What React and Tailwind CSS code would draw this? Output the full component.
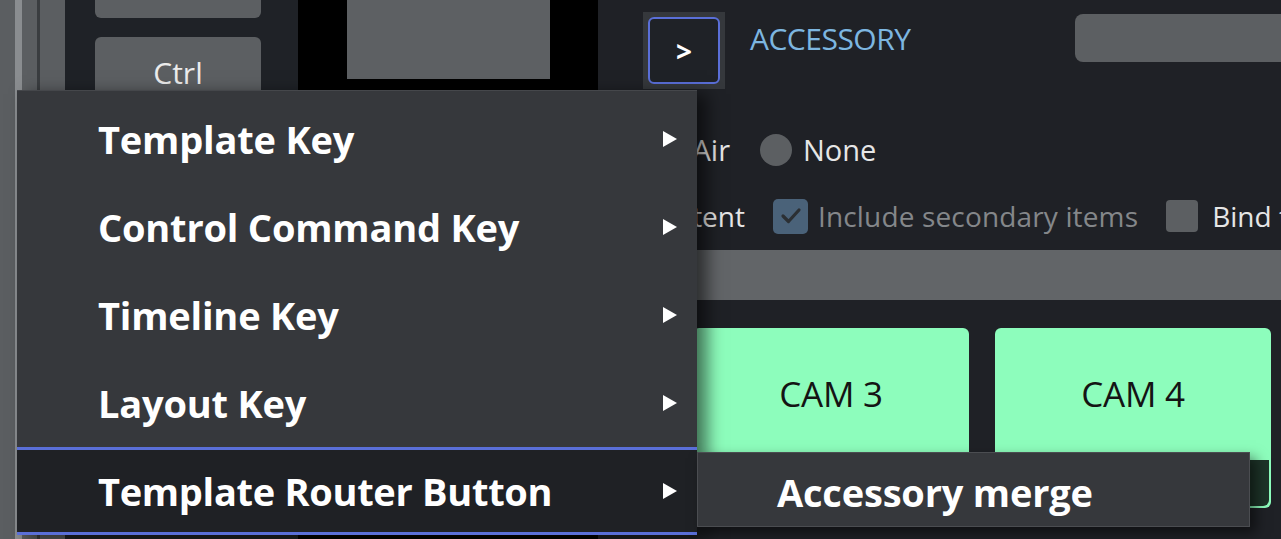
const menuItems = [
  "Template Key",
  "Control Command Key",
  "Timeline Key",
  "Layout Key",
];

const Arrow = () => (
  <svg width="16" height="18" viewBox="0 0 16 18" className="shrink-0">
    <path d="M1 1 L15 9 L1 17 Z" fill="#ffffff" />
  </svg>
);

const Check = () => (
  <svg width="22" height="18" viewBox="0 0 22 18">
    <path
      d="M3 9 L8.5 14.5 L19 3"
      fill="none"
      stroke="#2b2f33"
      strokeWidth="3.2"
      strokeLinecap="round"
      strokeLinejoin="round"
    />
  </svg>
);

const CamButton = ({ label }) => (
  <div className="w-[276px] h-[180px] shrink-0 flex flex-col rounded-md overflow-hidden bg-[#8dfdbc]">
    <div className="flex-1 flex items-center justify-center text-[35px] text-[#141414] tracking-[-0.3px]">
      {label}
    </div>
    <div className="h-[46px] mx-[2px] mb-[2px] rounded-b-md bg-[#1d3328]" />
  </div>
);

export default function App() {
  return (
    <div
      className="relative w-[1281px] h-[539px] overflow-hidden flex bg-[#1f2126]"
      style={{ fontFamily: '"Open Sans", "Noto Sans", sans-serif' }}
    >
      {/* left strips */}
      <div className="flex h-full shrink-0">
        <div className="w-[15px] bg-[#5b5e61]" />
        <div className="w-[7px] bg-[#8a8d90]" />
        <div className="w-[15px] bg-[#5b5e61]" />
        <div className="w-[3px] bg-[#3a3d40]" />
        <div className="w-[25px] bg-[#5b5e61]" />
      </div>

      {/* key buttons column */}
      <div className="w-[233px] shrink-0 h-full bg-[#1f2227] pl-[30px] flex flex-col gap-[19px]">
        <div className="w-[166px] h-[18px] rounded-b-md bg-[#5c5f62]" />
        <div className="w-[166px] h-[70px] rounded-md bg-[#5c5f62] flex items-center justify-center text-[30px] text-[#ececec]">
          Ctrl
        </div>
      </div>

      {/* preview column */}
      <div className="w-[300px] shrink-0 h-full bg-black pl-[49px]">
        <div className="w-[203px] h-[79px] bg-[#5d6063]" />
      </div>

      {/* settings column */}
      <div className="flex-1 min-w-0 overflow-hidden h-full flex flex-col bg-[#1f2126]">
        <div className="h-[118px] shrink-0 flex items-start">
          <div className="shrink-0 ml-[45px] mt-[12px] w-[82px] h-[77px] bg-[#35383c] p-[5px]">
            <div className="w-full h-full rounded-md border-2 border-[#5a6fd8] bg-[#1f2227] flex items-center justify-center text-[28px] font-bold text-white">
              &gt;
            </div>
          </div>
          <div className="ml-[25px] mt-[16px] text-[30px] text-[#7db6e0] tracking-[-0.5px]">
            ACCESSORY
          </div>
          <div className="shrink-0 ml-auto mt-[14px] w-[230px] h-[48px] rounded-lg bg-[#5c5f62] -mr-[24px]" />
        </div>

        <div className="h-[64px] shrink-0 flex items-center text-[29px] text-[#e6e6e6]">
          <div className="w-[132px] shrink-0 flex items-center justify-end gap-[11px]">
            <div className="w-[32px] h-[32px] shrink-0 rounded-full bg-[#5c5f62]" />
            <span>On Air</span>
          </div>
          <div className="ml-[30px] w-[32px] h-[32px] shrink-0 rounded-full bg-[#5c5f62]" />
          <span className="ml-[11px]">None</span>
        </div>

        <div className="h-[68px] shrink-0 flex items-center text-[28px] text-[#e6e6e6] whitespace-nowrap">
          <div className="w-[147px] shrink-0 flex items-center justify-end gap-[10px]">
            <div className="w-[34px] h-[34px] shrink-0 rounded bg-[#5c5f62]" />
            <span>Content</span>
          </div>
          <div className="ml-[28px] w-[35px] h-[35px] shrink-0 rounded-[5px] bg-[#4a6279] flex items-center justify-center">
            <Check />
          </div>
          <span className="ml-[10px] text-[#84878a] tracking-[0.15px]">Include secondary items</span>
          <div className="ml-[28px] w-[32px] h-[32px] shrink-0 rounded-[4px] bg-[#5c5f62]" />
          <span className="ml-[14px]">Bind to</span>
        </div>

        <div className="h-[50px] shrink-0 bg-[#626568]" />

        <div className="mt-[28px] pl-[95px] flex gap-[26px]">
          <CamButton label="CAM 3" />
          <CamButton label="CAM 4" />
        </div>
      </div>

      {/* context menu */}
      <div className="absolute left-[17px] top-[90px] w-[680px] h-[445px] bg-[#36383c] border-t border-[#45474b] pt-[4px] shadow-[10px_4px_16px_rgba(0,0,0,0.55)] font-bold text-white">
        {menuItems.map((item) => (
          <div
            key={item}
            className="h-[88px] flex items-center justify-between pl-[81px] pr-[19px] text-[38px] tracking-[-0.2px]"
          >
            <span>{item}</span>
            <Arrow />
          </div>
        ))}
        <div className="h-[88px] flex items-center justify-between pl-[81px] pr-[19px] text-[38px] tracking-[-0.3px] bg-[#1f2125] border-y-[3px] border-[#5a6fd8]">
          <span>Template Router Button</span>
          <Arrow />
        </div>
      </div>

      {/* submenu */}
      <div className="absolute left-[697px] top-[452px] w-[553px] h-[75px] bg-[#36383c] border border-[#4b4d51] shadow-[6px_6px_12px_rgba(0,0,0,0.5)] flex items-center pl-[79px] pt-[5px] font-bold text-white text-[38px] tracking-[-0.2px]">
        Accessory merge
      </div>
    </div>
  );
}
